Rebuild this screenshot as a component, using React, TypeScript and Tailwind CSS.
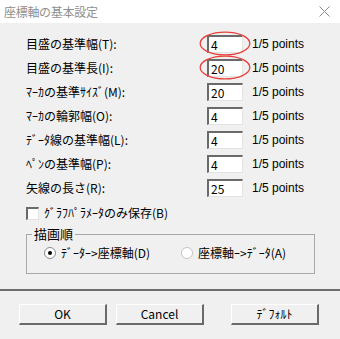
import React from 'react';

const font = { fontFamily: '"Noto Sans CJK JP", "Noto Sans", sans-serif' };

type Row = { label: string; value: string; mark?: boolean };

const rows: Row[] = [
  { label: '目盛の基準幅(T):', value: '4', mark: true },
  { label: '目盛の基準長(I):', value: '20', mark: true },
  { label: 'ﾏｰｶの基準ｻｲｽﾞ(M):', value: '20' },
  { label: 'ﾏｰｶの輪郭幅(O):', value: '4' },
  { label: 'ﾃﾞｰﾀ線の基準幅(L):', value: '4' },
  { label: 'ﾍﾟﾝの基準幅(P):', value: '4' },
  { label: '矢線の長さ(R):', value: '25' },
];

function Field({ value, mark }: { value: string; mark?: boolean }) {
  return (
    <div className="relative w-[36px] h-[18px]">
      <div className="w-full h-full bg-white border-t-2 border-l-2 border-t-[#6a6a6a] border-l-[#6a6a6a] border-b border-r border-b-[#e3e3e3] border-r-[#e3e3e3] pl-[2px] text-[12px] leading-[15px] text-black">
        {value}
      </div>
      {mark && (
        <svg className="absolute left-[-8px] top-[-4px]" width="52" height="25" viewBox="0 0 52 25">
          <ellipse cx="26" cy="12.5" rx="24.8" ry="11.4" fill="none" stroke="#e8403a" strokeWidth="1.3" />
        </svg>
      )}
    </div>
  );
}

function Btn({ label, className }: { label: string; className?: string }) {
  return (
    <div
      className={`w-[88px] h-[21px] bg-[#f0f0f0] border-t border-l border-t-white border-l-white border-b-2 border-r-2 border-b-[#6a6a6a] border-r-[#6a6a6a] flex items-center justify-center text-[12px] text-black ${className ?? ''}`}
    >
      {label}
    </div>
  );
}

export default function App() {
  return (
    <div className="w-[340px] h-[339px] bg-[#f0f0f0] overflow-hidden text-black" style={font}>
      <div className="h-[23px] bg-white flex items-center justify-between pl-[4px] pr-[10px]">
        <span className="text-[12px] text-[#8f8f8f] tracking-[-0.3px]">座標軸の基本設定</span>
        <svg width="11" height="11" viewBox="0 0 11 11">
          <path d="M0.5 0.5 L10.5 10.5 M10.5 0.5 L0.5 10.5" stroke="#8a8a8a" strokeWidth="1" />
        </svg>
      </div>

      <div className="pt-[9px] pl-[26px] pr-[25px]">
        {rows.map((r) => (
          <div key={r.label} className="flex items-center h-6">
            <div className="w-[181px] text-[12px] whitespace-nowrap">{r.label}</div>
            <Field value={r.value} mark={r.mark} />
            <div className="ml-[9px] text-[12px]" style={{ fontFamily: '"Liberation Sans", Arial, sans-serif' }}>
              1/5 points
            </div>
          </div>
        ))}

        <div className="flex items-center h-6 mt-[1px]">
          <div className="w-[13px] h-[13px] bg-white border-t-2 border-l-2 border-t-[#6a6a6a] border-l-[#6a6a6a] border-b border-r border-b-[#e3e3e3] border-r-[#e3e3e3]" />
          <span className="ml-[5px] text-[12px]">ｸﾞﾗﾌﾊﾟﾗﾒｰﾀのみ保存(B)</span>
        </div>

        <fieldset className="mt-[1px] border border-[#a8a8a8] pb-[9px]">
          <legend className="ml-[5px] px-[2px] text-[13px] leading-[16px]">描画順</legend>
          <div className="flex items-center h-[22px] pl-[17px] text-[12px]">
            <div className="w-[12px] h-[12px] rounded-full bg-white border border-[#8a8a8a] flex items-center justify-center">
              <div className="w-[4px] h-[4px] rounded-full bg-black" />
            </div>
            <span className="ml-[5px]">ﾃﾞｰﾀｰ&gt;座標軸(D)</span>
            <div className="ml-[31px] w-[12px] h-[12px] rounded-full bg-white border border-[#c4c4c4]" />
            <span className="ml-[5px]">座標軸ｰ&gt;ﾃﾞｰﾀ(A)</span>
          </div>
        </fieldset>
      </div>

      <div className="mt-[15px] h-[2px] bg-[#6e6e6e]" />

      <div className="flex pt-[13px] pl-[19px]">
        <Btn label="OK" />
        <Btn label="Cancel" className="ml-[9px]" />
        <Btn label="ﾃﾞﾌｫﾙﾄ" className="ml-[27px]" />
      </div>
    </div>
  );
}
